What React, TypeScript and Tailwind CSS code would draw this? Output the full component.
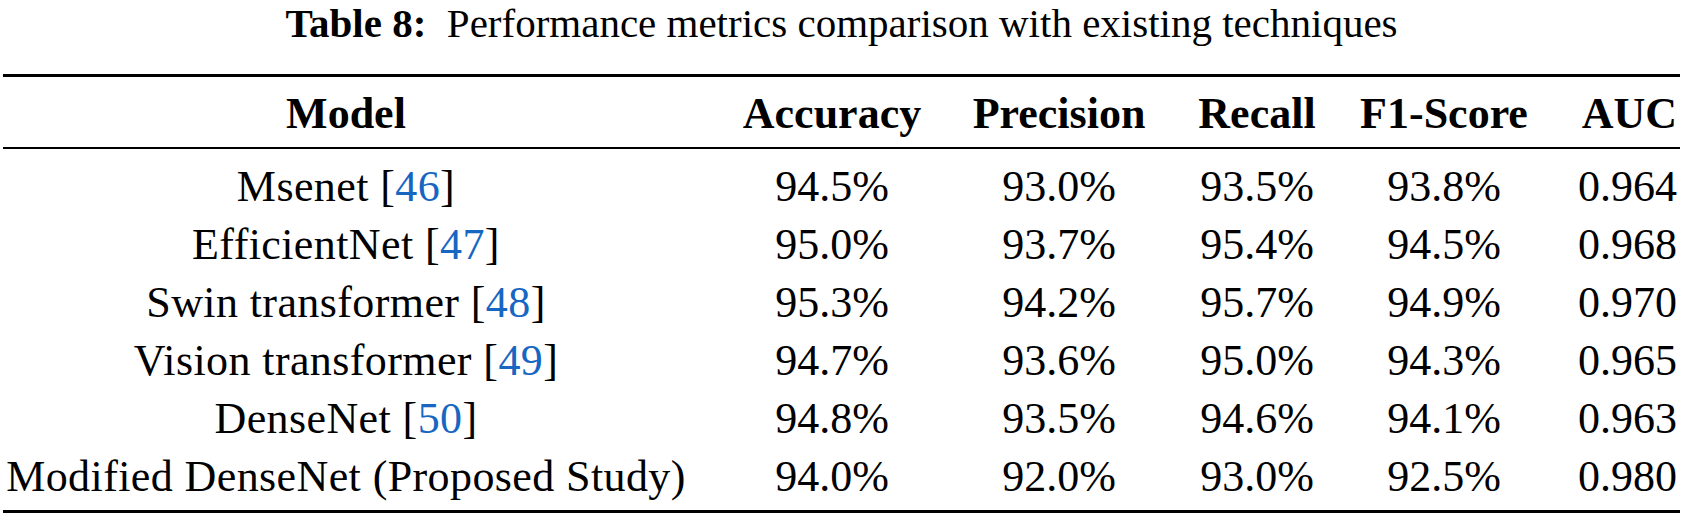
const rows = [
  { name: "Msenet", ref: "46", v: ["94.5%", "93.0%", "93.5%", "93.8%", "0.964"] },
  { name: "EfficientNet", ref: "47", v: ["95.0%", "93.7%", "95.4%", "94.5%", "0.968"] },
  { name: "Swin transformer", ref: "48", v: ["95.3%", "94.2%", "95.7%", "94.9%", "0.970"] },
  { name: "Vision transformer", ref: "49", v: ["94.7%", "93.6%", "95.0%", "94.3%", "0.965"] },
  { name: "DenseNet", ref: "50", v: ["94.8%", "93.5%", "94.6%", "94.1%", "0.963"] },
  { name: "Modified DenseNet (Proposed Study)", ref: "", v: ["94.0%", "92.0%", "93.0%", "92.5%", "0.980"] },
]

const headers = ["Model", "Accuracy", "Precision", "Recall", "F1-Score", "AUC"]

// fixed tracks so each column's centre lands where the reference puts it
const grid = "grid grid-cols-[686px_286px_168px_228px_146px_163px]"

const Cell = ({ i, className = "", children }: { i: number; className?: string; children: React.ReactNode }) => (
  <div className={i === 5 ? "flex min-w-0 justify-end pr-[3px]" : "flex min-w-0 justify-center"}>
    <span className={`whitespace-nowrap ${className}`}>{children}</span>
  </div>
)

export default function App() {
  return (
    <div className="h-[515px] w-[1683px] overflow-hidden bg-white text-black font-['Liberation_Serif',serif]">
      <div className="text-center text-[41px] leading-[46px] whitespace-nowrap">
        <span className="font-bold">Table 8:</span>
        <span>&nbsp; Performance metrics comparison with existing techniques</span>
      </div>

      <div className="mt-[28px] px-[3px]">
        <div className="h-[3px] bg-black" />

        <div className={`${grid} pt-[8px] text-[44px] leading-[58px] font-bold`}>
          {headers.map((h, i) => (
            <Cell key={h} i={i}>
              {h}
            </Cell>
          ))}
        </div>

        <div className="mt-[4px] h-[2px] bg-black" />

        <div className="pt-[9px] text-[44px] leading-[58px]">
          {rows.map((r) => (
            <div key={r.name} className={grid}>
              <Cell i={0} className="tracking-[0.4px]">
                {r.name}
                {r.ref && (
                  <>
                    {" "}[<span className="text-[#1766c2]">{r.ref}</span>]
                  </>
                )}
              </Cell>
              {r.v.map((v, j) => (
                <Cell key={j} i={j + 1}>
                  {v}
                </Cell>
              ))}
            </div>
          ))}
        </div>

        <div className="mt-[4px] h-[3px] bg-black" />
      </div>
    </div>
  )
}
